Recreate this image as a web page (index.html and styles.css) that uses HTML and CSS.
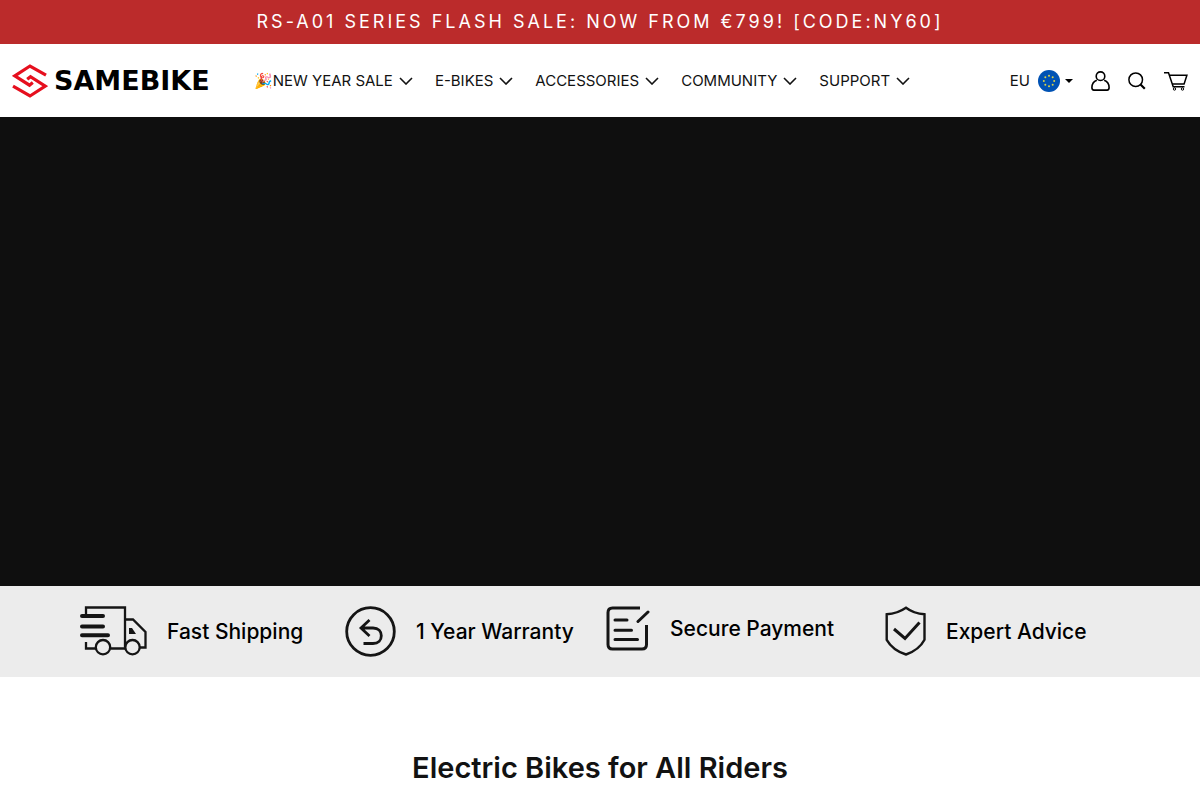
FILE: index.html
```html
<!DOCTYPE html>
<html lang="en">
<head>
    <meta charset="UTF-8">
    <meta name="viewport" content="width=device-width, initial-scale=1.0">
    <title>SAMEBIKE</title>
    <link rel="stylesheet" href="styles.css">
</head>
<body>
    <!-- Announcement bar -->
    <div class="announcement">
        <a href="#">RS-A01 SERIES FLASH SALE: NOW FROM €799! [CODE:NY60]</a>
    </div>

    <!-- Header -->
    <header class="header">
        <a class="logo" href="#">
            <svg class="logo-mark" width="36" height="34" viewBox="0 0 36 34" fill="none" stroke="#e60f1e" stroke-width="3.2">
                <path d="M34 11.200L18 2 2.800 11.800l14.700 9.400 3.300-2.600"/>
                <path d="M1 22.200L18 32l15.300-9.800L18.500 12.700l-3.300 2.600"/>
            </svg>
            <span class="logo-text">SAMEBIKE</span>
        </a>

        <nav class="nav">
            <a href="#"><span class="emoji">🎉</span>NEW YEAR SALE <svg class="chevron" viewBox="0 0 14 8"><path d="M1 1l6 6 6-6"/></svg></a>
            <a href="#">E-BIKES <svg class="chevron" viewBox="0 0 14 8"><path d="M1 1l6 6 6-6"/></svg></a>
            <a href="#">ACCESSORIES <svg class="chevron" viewBox="0 0 14 8"><path d="M1 1l6 6 6-6"/></svg></a>
            <a href="#">COMMUNITY <svg class="chevron" viewBox="0 0 14 8"><path d="M1 1l6 6 6-6"/></svg></a>
            <a href="#">SUPPORT <svg class="chevron" viewBox="0 0 14 8"><path d="M1 1l6 6 6-6"/></svg></a>
        </nav>

        <div class="tools">
            <button class="region" type="button">
                <span>EU</span>
                <svg width="22" height="22" viewBox="0 0 22 22">
                    <circle cx="11" cy="11" r="11" fill="#0052b4"/>
                    <g fill="#d9d34a">
                        <circle cx="11" cy="5.800" r="1"/>
                        <circle cx="14.700" cy="7.300" r="1"/>
                        <circle cx="16.200" cy="11" r="1"/>
                        <circle cx="14.700" cy="14.700" r="1"/>
                        <circle cx="11" cy="16.200" r="1"/>
                        <circle cx="7.300" cy="14.700" r="1"/>
                        <circle cx="5.800" cy="11" r="1"/>
                        <circle cx="7.300" cy="7.300" r="1"/>
                    </g>
                </svg>
                <svg class="caret" width="8" height="4" viewBox="0 0 8 4"><path d="M0 0h8L4 4z"/></svg>
            </button>
            <a href="#" aria-label="Account">
                <svg width="19" height="20" viewBox="0 0 19 20" fill="none" stroke="#000" stroke-width="1.6">
                    <circle cx="9.500" cy="5.200" r="4.300"/>
                    <path d="M5.800 9.200C2.500 10.500.900 13 .900 16.500c0 2 .8 2.600 2 2.600h13.200c1.200 0 2-.6 2-2.600 0-3.500-1.600-6-4.900-7.300"/>
                </svg>
            </a>
            <a href="#" aria-label="Search">
                <svg width="18" height="18" viewBox="0 0 18 18" fill="none" stroke="#000">
                    <circle cx="7.700" cy="7.700" r="6.800" stroke-width="1.500"/>
                    <path d="M12.300 12.300l4.500 4.500" stroke-width="2.200"/>
                </svg>
            </a>
            <a href="#" aria-label="Cart">
                <svg width="24" height="20" viewBox="0 0 24 20" fill="none" stroke="#000" stroke-width="1.500">
                    <path d="M0 1.800h4.500l4.700 14h11.300"/>
                    <path d="M5.200 4.300h17.700l-2.800 8.600H8.200"/>
                    <circle cx="10.500" cy="18" r="1.200" stroke-width="1"/>
                    <circle cx="18.500" cy="18" r="1.200" stroke-width="1"/>
                </svg>
            </a>
        </div>
    </header>

    <main>
        <section class="hero" aria-label="Slideshow"></section>

        <!-- Service promises -->
        <section class="features">
            <div class="feature">
                <svg width="67" height="50" viewBox="0 0 67 50" fill="none" stroke="#151515" stroke-width="2.300">
                    <path d="M6 8V1.500h39v39.800"/>
                    <path d="M6 36v6.500h10M31 42.500h14"/>
                    <path d="M45 13.500h8L65.500 26v15.500H60"/>
                    <circle cx="23" cy="41.200" r="7.200"/>
                    <circle cx="52.500" cy="41.200" r="7.200"/>
                    <path d="M2 10h21M2 20.500h21M2 29.300h26" stroke-width="4" stroke-linecap="round"/>
                    <path d="M49 22h3l4 6h-7z" fill="#151515" stroke="none"/>
                </svg>
                <span>Fast Shipping</span>
            </div>
            <div class="feature">
                <svg width="51" height="51" viewBox="0 0 51 51" fill="none" stroke="#151515" stroke-width="2.800">
                    <circle cx="25.500" cy="25.500" r="23.800"/>
                    <path d="M24.500 14l-8.500 8 8.500 8M16 22h12c5.500 0 8.300 3.500 8.300 7.800s-2.800 7.700-8.300 7.700h-9.500"/>
                </svg>
                <span>1 Year Warranty</span>
            </div>
            <div class="feature">
                <svg width="45" height="45" viewBox="0 0 45 45" fill="none" stroke="#151515" stroke-width="3">
                    <path d="M35 2H7.500C4.500 2 3 3.500 3 6.500v32C3 41.500 4.500 43 7.500 43H37c3 0 4.500-1.500 4.500-4.500V19"/>
                    <path d="M10 14h12M10 24.300h16.500M10 33.500h22.500M33 15.500l10-9.500" stroke-linecap="round"/>
                </svg>
                <span>Secure Payment</span>
            </div>
            <div class="feature">
                <svg width="41" height="50" viewBox="0 0 41 50" fill="none" stroke="#151515" stroke-width="2.400">
                    <path d="M21 1.700C15 5.800 8.500 7.800 1.700 8.300v25.500c4 7 11 12 19.300 14.700 8-2.700 14.800-7.700 18.500-14.700V8.300C32.500 7.800 26.500 5.800 21 1.700z"/>
                    <path d="M9 23l11 9.500 14.500-16" stroke-width="3"/>
                </svg>
                <span>Expert Advice</span>
            </div>
        </section>

        <h2 class="section-title">Electric Bikes for All Riders</h2>
    </main>
</body>
</html>
```
FILE: styles.css
```css
* {
    box-sizing: border-box;
}
body {
    margin: 0;
    font-family: Inter, "Open Sans", sans-serif;
    font-size: 15px;
    color: #121212;
    background-color: #fff;
}
a {
    color: inherit;
    text-decoration: none;
}
svg {
    display: block;
    flex-shrink: 0;
}
.announcement {
    padding: 10px 20px;
    font-size: 18px;
    line-height: 24px;
    letter-spacing: 3px;
    text-align: center;
    color: #fff;
    background-color: #bb2b2b;
}
.header {
    display: flex;
    align-items: center;
    padding: 16px 12px 15px;
    line-height: 42px;
}
.logo {
    display: flex;
    align-items: center;
    gap: 6px;
    color: #000;
}
.logo-text {
    font-family: "DejaVu Sans", sans-serif;
    font-size: 27px;
    font-weight: bold;
}
.nav {
    display: flex;
    gap: 22px;
    margin-left: 44px;
    white-space: nowrap;
}
.nav a {
    display: flex;
    align-items: center;
}
.chevron {
    width: 14px;
    height: 8px;
    margin-left: 6px;
    fill: none;
    stroke: #121212;
    stroke-width: 1.6;
}
.tools {
    display: flex;
    align-items: center;
    gap: 18px;
    margin-left: auto;
}
.region {
    display: flex;
    align-items: center;
    gap: 8px;
    padding: 0;
    border: none;
    background: none;
    font: inherit;
    color: inherit;
    cursor: pointer;
}
.caret {
    margin-left: -3px;
}
.hero {
    aspect-ratio: 1200 / 469;
    background-color: #0f0f0f;
}
.features {
    display: grid;
    grid-template-columns: 265fr 260fr 280fr 235fr;
    align-items: start;
    padding: 20px 80px;
    background-color: #ececec;
}
.feature {
    display: flex;
    align-items: center;
    gap: 20px;
    font-size: 21px;
    font-weight: 500;
    color: #000;
    white-space: nowrap;
}
.section-title {
    margin: 71px 20px 0;
    font-size: 29px;
    line-height: 40px;
    font-weight: 600;
    text-align: center;
}
```
